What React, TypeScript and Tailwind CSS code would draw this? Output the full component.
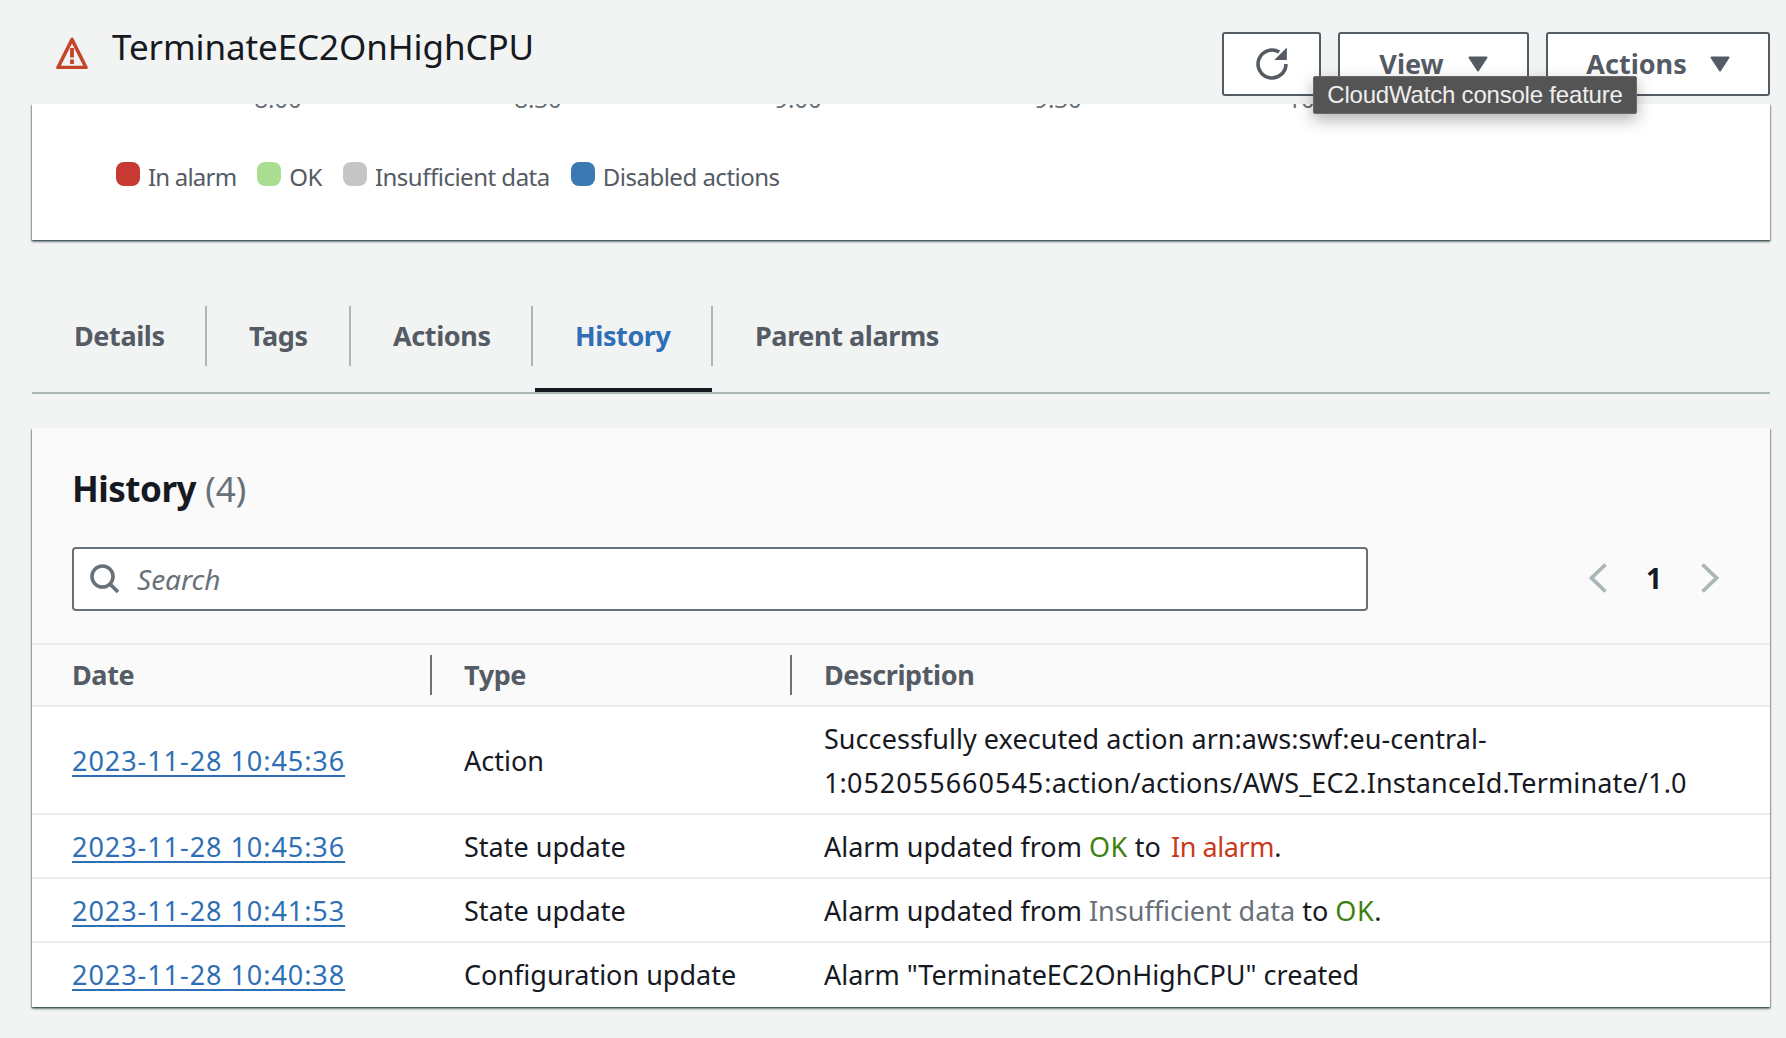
import React from "react";

const font = { fontFamily: '"Noto Sans", sans-serif' };

function Caret() {
  return (
    <svg width="20" height="16" viewBox="0 0 20 16" className="shrink-0">
      <path d="M1.5 1.5h17L10 14.5z" fill="#545b64" stroke="#545b64" strokeWidth="2" strokeLinejoin="round" />
    </svg>
  );
}

const tabs = [
  { label: "Details", w: "w-[175px]", sep: true },
  { label: "Tags", w: "w-[144px]", sep: true },
  { label: "Actions", w: "w-[182px]", sep: true },
  { label: "History", w: "w-[180px]", sep: true, active: true },
  { label: "Parent alarms", w: "w-[240px]", sep: false },
];

const legend = [
  { label: "In alarm", color: "bg-[#c63a32]", track: "tracking-[-0.8px]" },
  { label: "OK", color: "bg-[#a9dd92]", track: "tracking-[-0.5px]" },
  { label: "Insufficient data", color: "bg-[#c5c5c5]", track: "tracking-[-0.5px]" },
  { label: "Disabled actions", color: "bg-[#3c78b4]", track: "tracking-[-0.5px]" },
];

const Green = ({ children }: { children: React.ReactNode }) => <span className="tracking-[0.5px] text-[#3f7f0f]">{children}</span>;
const Red = ({ children }: { children: React.ReactNode }) => <span className="ml-[3px] tracking-[-0.4px] text-[#c9391c]">{children}</span>;
const Gray = ({ children }: { children: React.ReactNode }) => <span className="text-[#687078]">{children}</span>;

const rows: { date: string; type: string; desc: React.ReactNode; tall?: boolean }[] = [
  {
    date: "2023-11-28 10:45:36",
    type: "Action",
    desc: (
      <>
        <span className="tracking-[0.05px]">Successfully executed action arn:aws:swf:eu-central-</span>
        <br />
        <span className="tracking-[0.15px]">
          1:<span className="tracking-[1px]">052055660545</span>:action/actions/AWS_EC2.InstanceId.Terminate/1.0
        </span>
      </>
    ),
    tall: true,
  },
  {
    date: "2023-11-28 10:45:36",
    type: "State update",
    desc: (
      <>
        Alarm updated from <Green>OK</Green> to <Red>In alarm</Red>.
      </>
    ),
  },
  {
    date: "2023-11-28 10:41:53",
    type: "State update",
    desc: (
      <>
        Alarm updated from <Gray>Insufficient data</Gray> to <Green>OK</Green>.
      </>
    ),
  },
  {
    date: "2023-11-28 10:40:38",
    type: "Configuration update",
    desc: <>Alarm "TerminateEC2OnHighCPU" created</>,
  },
];

export default function App() {
  return (
    <div style={font} className="relative h-[1038px] w-[1786px] overflow-hidden bg-[#f2f3f3] text-[#16191f]">
      {/* Sticky header */}
      <header className="relative z-10 flex h-[104px] items-start justify-between pr-[16px] pl-[56px]">
        <div className="flex items-center gap-[24px] pt-[25px]">
          <svg width="32" height="32" viewBox="0 0 32 32" className="mt-[12px] shrink-0">
            <path d="M16 2.5 2 30.5h28z" fill="none" stroke="#c4442a" strokeWidth="3.6" strokeLinejoin="round" />
            <path d="M16 11v9.5M16 22.5v4.5" fill="none" stroke="#c4442a" strokeWidth="3.8" />
          </svg>
          <h1 className="text-[35px] leading-[44px] font-normal tracking-[-0.1px]">TerminateEC2OnHighCPU</h1>
        </div>
        <div className="flex gap-[17px] pt-[32px]">
          <button className="flex h-[64px] w-[99px] items-center justify-center rounded-[3px] border-2 border-[#545b64] bg-white">
            <svg width="36" height="36" viewBox="0 0 16 16" fill="none">
              <path d="M14.2 8a6.2 6.2 0 1 1-3-5.3" stroke="#545b64" strokeWidth="1.6" />
              <path d="M14.2 1.6v4.2h-4.2z" fill="#545b64" stroke="#545b64" strokeWidth="0.8" />
            </svg>
          </button>
          <button className="flex h-[64px] w-[191px] items-center justify-center gap-[24px] rounded-[3px] border-2 border-[#545b64] bg-white text-[27px] font-bold text-[#545b64]">
            View
            <Caret />
          </button>
          <button className="flex h-[64px] w-[224px] items-center justify-center gap-[23px] rounded-[3px] border-2 border-[#545b64] bg-white text-[27px] font-bold text-[#545b64]">
            Actions
            <Caret />
          </button>
        </div>
      </header>

      {/* Tooltip */}
      <div
        style={{ fontFamily: '"Liberation Sans", sans-serif' }}
        className="absolute top-[76px] left-[1313px] z-20 flex h-[38px] w-[324px] items-center justify-center rounded-[2px] border border-[#6a6a6a] bg-[#545454] text-[24px] tracking-[-0.2px] whitespace-nowrap text-[#eeeeee] shadow-[0_6px_16px_rgba(0,0,0,0.3)]"
      >
        CloudWatch console feature
      </div>

      {/* Chart card */}
      <section className="mr-[16px] ml-[32px] h-[136px] bg-white shadow-[0_2px_2px_rgba(0,28,36,0.5),1px_1px_1px_rgba(0,28,36,0.25),-1px_1px_1px_rgba(0,28,36,0.25)]">
        <div className="h-[5px] overflow-hidden">
          <div className="-mt-[21px] flex pl-[116px] text-[24px] leading-[32px] text-[#687078]">
            {["8:00", "8:30", "9:00", "9:30", "10:00"].map((t) => (
              <span key={t} className="w-[260px] text-center">
                {t}
              </span>
            ))}
          </div>
        </div>
        <div className="mt-[52px] flex items-end gap-[21px] pl-[84px]">
          {legend.map((l) => (
            <div key={l.label} className="flex items-end gap-[8px]">
              <span className={`h-[24px] w-[24px] rounded-[8px] ${l.color}`} />
              <span className={`-mb-[7px] text-[24px] leading-[32px] text-[#545b64] ${l.track}`}>{l.label}</span>
            </div>
          ))}
        </div>
      </section>

      {/* Tabs */}
      <nav className="mt-[48px] mr-[16px] ml-[32px] flex h-[106px] border-b-2 border-[#aab7b8]">
        {tabs.map((t) => (
          <div key={t.label} className={`relative h-full ${t.w}`}>
            <div
              className={`mt-[18px] flex h-[60px] items-center pl-[42px] text-[27px] font-bold tracking-[-0.4px] ${t.sep ? "border-r-2 border-[#aab7b8]" : ""} ${t.active ? "text-[#2e6fb5]" : "text-[#545b64]"}`}
            >
              {t.label}
            </div>
            {t.active && <div className="absolute right-[1px] bottom-0 left-[2px] h-[4px] bg-[#16191f]" />}
          </div>
        ))}
      </nav>

      {/* History card */}
      <section className="mt-[34px] mr-[16px] ml-[32px] bg-white shadow-[0_2px_2px_rgba(0,28,36,0.5),1px_1px_1px_rgba(0,28,36,0.25),-1px_1px_1px_rgba(0,28,36,0.25)]">
        <div className="bg-[#fafafa] pt-[39px] pr-[51px] pb-[32px] pl-[40px]">
          <h2 className="text-[35px] leading-[44px] font-bold">
            <span className="tracking-[-0.5px]">History</span> <span className="font-normal text-[#687078]">(4)</span>
          </h2>
          <div className="mt-[36px] flex items-center justify-between">
            <div className="flex h-[64px] w-[1296px] items-center gap-[17px] rounded-[4px] border-2 border-[#687078] bg-white pl-[16px]">
              <svg width="30" height="30" viewBox="0 0 30 30" fill="none" className="shrink-0">
                <circle cx="12.5" cy="12.5" r="10.5" stroke="#687078" strokeWidth="3.6" />
                <path d="m20 20 8 8" stroke="#687078" strokeWidth="3.8" />
              </svg>
              <span className="text-[28px] text-[#687078] italic">Search</span>
            </div>
            <div className="-mt-[2px] flex items-center">
              <svg width="18" height="30" viewBox="0 0 18 30" fill="none">
                <path d="M16.5 1.5 2.5 15l14 13.5" stroke="#aab7b8" strokeWidth="3.8" />
              </svg>
              <span className="w-[94px] text-center text-[28px] leading-[40px] font-bold">1</span>
              <svg width="18" height="30" viewBox="0 0 18 30" fill="none">
                <path d="m1.5 1.5 14 13.5-14 13.5" stroke="#aab7b8" strokeWidth="3.8" />
              </svg>
            </div>
          </div>
        </div>

        <div className="grid h-[64px] grid-cols-[400px_360px_1fr] items-center border-y-2 border-[#eaeded] bg-[#fafafa] text-[27px] font-bold tracking-[-0.4px] text-[#545b64]">
          <div className="flex h-[40px] items-center border-r-2 border-[#687078] pl-[40px]">Date</div>
          <div className="flex h-[40px] items-center border-r-2 border-[#687078] pl-[32px]">Type</div>
          <div className="flex h-[40px] items-center pl-[32px]">Description</div>
        </div>

        {rows.map((r, i) => (
          <div
            key={i}
            className={`grid grid-cols-[400px_360px_1fr] items-center text-[27px] leading-[44px] ${i < rows.length - 1 ? "border-b-2 border-[#eaeded] pt-[2px]" : ""} ${r.tall ? "h-[108px]" : "h-[64px]"}`}
          >
            <a className="pl-[40px] tracking-[0.95px] text-[#2e6fb5] underline decoration-2 underline-offset-[4px]">{r.date}</a>
            <div className="pl-[32px]">{r.type}</div>
            <div className="pl-[32px] whitespace-nowrap">{r.desc}</div>
          </div>
        ))}
      </section>
    </div>
  );
}
